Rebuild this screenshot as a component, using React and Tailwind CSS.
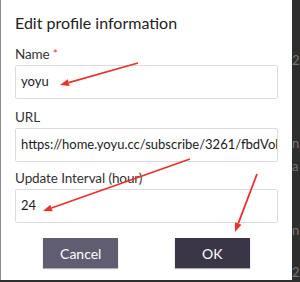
const Arrow = ({ x1, y1, x2, y2 }) => {
  const a = Math.atan2(y2 - y1, x2 - x1);
  const len = 9;
  const w = 3.5;
  const bx = x2 - len * Math.cos(a);
  const by = y2 - len * Math.sin(a);
  const p1 = `${bx + w * Math.sin(a)},${by - w * Math.cos(a)}`;
  const p2 = `${bx - w * Math.sin(a)},${by + w * Math.cos(a)}`;
  return (
    <g>
      <line x1={x1} y1={y1} x2={bx} y2={by} stroke="#e8332b" strokeWidth="1.8" />
      <polygon points={`${x2},${y2} ${p1} ${p2}`} fill="#e8332b" />
    </g>
  );
};

const Field = ({ label, value, required, className }) => (
  <div className={className}>
    <div className="text-[13.5px] leading-[20px] text-[#333] tracking-[-0.1px]">
      {label}
      {required && <span className="text-[#e33] ml-[3px] text-[12px] align-top">*</span>}
    </div>
    <div className="mt-[1px] h-[34px] border border-[#dcdcdc] rounded-[2px] px-[5px] flex items-center overflow-hidden whitespace-nowrap text-[13px] text-[#1b1b1b]">
      {value}
    </div>
  </div>
);

export default function App() {
  return (
    <div
      className="relative w-[300px] h-[282px] bg-[#2e2e2e] flex overflow-hidden"
      style={{ fontFamily: "Lato, 'Noto Sans', sans-serif" }}
    >
      <div className="w-[292px] h-[280px] bg-white border-l border-[#8c8c8c] px-[14px] shrink-0">
        <h2 className="mt-[11px] text-[16px] leading-[24px] text-[#222]">Edit profile information</h2>
        <Field className="mt-[9px]" label="Name" required value="yoyu" />
        <Field className="mt-[8px]" label="URL" value="https://home.yoyu.cc/subscribe/3261/fbdVol8xQ2" />
        <Field className="mt-[6px]" label="Update Interval (hour)" value="24" />
        <div className="grid grid-cols-2 justify-items-center mt-[15px]">
          <button className="w-[75px] h-[30px] bg-[#605c71] text-white text-[14px] shadow-[0_1px_1px_rgba(0,0,0,0.3)]">
            Cancel
          </button>
          <button className="w-[75px] h-[30px] bg-[#3a3647] text-white text-[14px] shadow-[0_1px_1px_rgba(0,0,0,0.3)]">
            OK
          </button>
        </div>
      </div>
      <div className="flex-1 flex flex-col overflow-hidden whitespace-nowrap text-[#777] text-[13px] leading-[16px] pt-[52px]">
        <span>2</span>
        <span className="mt-[67px]">n.</span>
        <span className="mt-[7px]">a</span>
        <span className="mt-[48px]">n</span>
        <span className="mt-[26px]">2</span>
      </div>
      <svg className="absolute inset-0 pointer-events-none" width="300" height="282">
        <Arrow x1={138} y1={63} x2={60} y2={85} />
        <Arrow x1={190} y1={159} x2={43} y2={211} />
        <Arrow x1={257} y1={174} x2={235} y2={232} />
      </svg>
    </div>
  );
}
